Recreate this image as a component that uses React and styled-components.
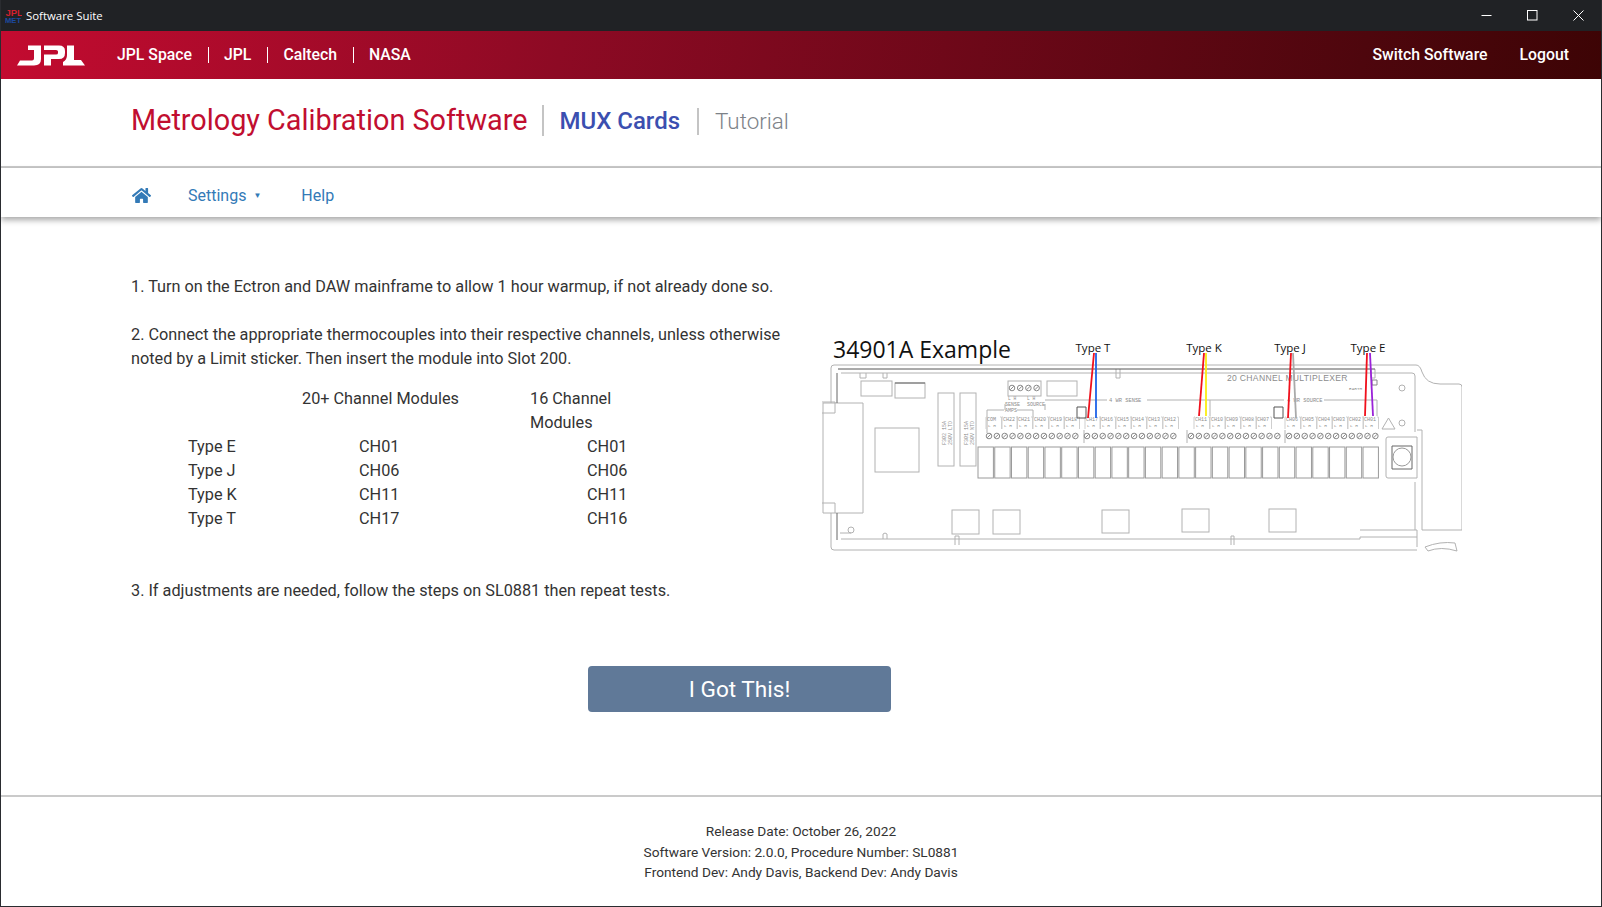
import React from "react";
import styled, { createGlobalStyle } from "styled-components";
import { FaHome } from "react-icons/fa";

const GlobalStyle = createGlobalStyle`
  html, body {
    margin: 0;
    padding: 0;
    background: #fff;
  }
  body {
    font-family: Roboto, "Liberation Sans", sans-serif;
  }
`;

const Page = styled.div`
  width: 1602px;
  height: 907px;
  box-sizing: border-box;
  display: flex;
  flex-direction: column;
  overflow: hidden;
  border-left: 1px solid #2a2c30;
  border-right: 1px solid #2a2c30;
  border-bottom: 1px solid #2a2c30;
`;

const TitleBar = styled.div`
  height: 31px;
  flex: none;
  background: #202225;
  display: flex;
  align-items: center;
  padding-left: 4px;
  color: #fff;
  font-family: "Open Sans", sans-serif;
  font-size: 11.4px;
`;

const TitleText = styled.span`
  margin-left: 4px;
`;

const WindowButtons = styled.div`
  margin-left: auto;
  display: flex;
  height: 100%;
`;

const WindowButton = styled.div`
  width: 46px;
  display: flex;
  align-items: center;
  justify-content: center;
`;

const RedBar = styled.div`
  height: 48px;
  flex: none;
  background: linear-gradient(100deg, #c30b30 0%, #8d0a24 35%, #4e060d 85%, #3d0405 100%);
  display: flex;
  align-items: center;
  padding: 0 32px 0 16px;
  color: #fff;
  font-size: 15.8px;
  font-weight: 500;
`;

const RedLinks = styled.div`
  display: flex;
  align-items: center;
  margin-left: 32px;
`;

const RedLink = styled.span`
  padding: 0 16px;
  line-height: 16px;
  border-left: ${(p) => (p.$first ? "none" : "1px solid #fff")};
  padding-left: ${(p) => (p.$first ? "0" : "15px")};
`;

const RedRight = styled.div`
  margin-left: auto;
  display: flex;
  gap: 32px;
  line-height: 16px;
`;

const Header = styled.header`
  height: 89px;
  flex: none;
  box-sizing: border-box;
  border-bottom: 2px solid #cacaca;
  padding: 26px 0 0 130px;
  display: flex;
  align-items: flex-start;
`;

const AppTitle = styled.span`
  font-size: 28.8px;
  line-height: 31px;
  color: #c10e30;
  padding-right: 15px;
  border-right: 2px solid #c4c4c4;
`;

const SubTitle = styled.span`
  line-height: 27px;
  margin-top: 3px;
  font-size: ${(p) => (p.$active ? "24px" : "22.4px")};
  font-weight: ${(p) => (p.$active ? 500 : 300)};
  color: ${(p) => (p.$active ? "#3b4fb0" : "#7d8288")};
  padding: 0 ${(p) => (p.$active ? "17px" : "0")} 0 ${(p) => (p.$active ? "15px" : "0")};
  ${(p) => p.$active && "border-right: 2px solid #c4c4c4;"}
  margin-left: ${(p) => (p.$active ? "0" : "16px")};
`;

const NavBar = styled.nav`
  height: 49px;
  flex: none;
  box-sizing: border-box;
  display: flex;
  align-items: center;
  padding: 5px 0 0 131px;
  color: #337ab7;
  font-size: 16px;
  box-shadow: 0 3px 6px rgba(0, 0, 0, 0.35);
  position: relative;
`;

const HomeLink = styled.span`
  display: flex;
  font-size: 19px;
  margin-right: 37px;
`;

const NavItem = styled.span`
  margin-right: 40px;
  display: flex;
  align-items: center;
`;

const Caret = styled.span`
  font-size: 8px;
  margin-left: 7px;
`;

const Main = styled.main`
  flex: 1;
  box-sizing: border-box;
  padding: 58px 0 0 130px;
  display: flex;
  flex-direction: column;
  font-size: 16.25px;
  line-height: 24px;
  color: #333;
`;

const Columns = styled.div`
  display: flex;
  align-items: flex-start;
`;

const LeftColumn = styled.div`
  width: 691px;
  flex: none;
`;

const RightColumn = styled.div`
  padding-top: 50px;
`;

const Step = styled.p`
  margin: 0 0 ${(p) => p.$gap ?? 24}px;
  width: 660px;
`;

const ChannelGrid = styled.div`
  display: grid;
  grid-template-columns: repeat(12, 57px);
  margin-bottom: 48px;
`;

const Cell = styled.div`
  grid-column: ${(p) => p.$col} / span ${(p) => p.$span};
`;

const ButtonRow = styled.div`
  display: flex;
  padding-left: 457px;
  margin-top: 63px;
`;

const GotItButton = styled.button`
  width: 303px;
  height: 46px;
  border: none;
  border-radius: 4px;
  background: #607998;
  color: #fff;
  font-family: inherit;
  font-size: 22.6px;
`;

const Footer = styled.footer`
  height: 111px;
  flex: none;
  box-sizing: border-box;
  border-top: 2px solid #cacaca;
  padding-top: 24px;
  text-align: center;
  font-size: 13.7px;
  line-height: 20.5px;
  color: #333;
`;

// stylised JPL wordmark, drawn from the crop
const JplLogo = () => (
  <svg width="68" height="21" viewBox="0 0 68 21">
    <path d="M0 20.5 L3 15.5 H15 Q17 15.5 17 13.5 V5 H11 V0.5 H24 V14 Q24 20.5 17 20.5 Z" fill="#fff" />
    <path d="M27 0.5 H42 Q48 0.5 48 6 V8 Q48 14 42 14 H34 V20.5 H27 V9.5 H39 Q41 9.5 41 8 V6.5 Q41 5 39 5 H27 Z" fill="#fff" />
    <path d="M46 17 Q50 15 50 10 V0.5 H57 V15 H64 L68 20.5 H46 Z" fill="#fff" />
  </svg>
);

const AppIcon = () => (
  <svg width="17" height="15" viewBox="0 0 17 15">
    <text x="0.5" y="7.5" fontFamily="Liberation Sans" fontSize="9.5" fontWeight="700" fill="#d3202e">JPL</text>
    <text x="0" y="14.5" fontFamily="Liberation Sans" fontSize="7.6" fontWeight="700" fill="#1c4aa0">MET</text>
  </svg>
);

const Minimize = () => (
  <svg width="11" height="11" viewBox="0 0 11 11"><path d="M0.5 5.5 H10.5" stroke="#fff" /></svg>
);
const Maximize = () => (
  <svg width="11" height="11" viewBox="0 0 11 11"><rect x="0.5" y="0.5" width="9.5" height="9.5" fill="none" stroke="#fff" /></svg>
);
const CloseIcon = () => (
  <svg width="11" height="11" viewBox="0 0 11 11"><path d="M0.5 0.5 L10.5 10.5 M10.5 0.5 L0.5 10.5" stroke="#fff" /></svg>
);

// diagram coordinates are screenshot pixels, the viewBox takes care of the origin
const OX = 822;
const OY = 325;
const relays = Array.from({ length: 24 }, (_, i) => 978 + i * 16.74);
const screwGroups = [989, 1087, 1191, 1289];
const channels = [
  ["COM", 987], ["CH22", 1003], ["CH21", 1018], ["CH20", 1034], ["CH19", 1050], ["CH18", 1065],
  ["CH17", 1086], ["CH16", 1101], ["CH15", 1117], ["CH14", 1132], ["CH13", 1148], ["CH12", 1164],
  ["CH11", 1195], ["CH10", 1211], ["CH09", 1226], ["CH08", 1242], ["CH07", 1257],
  ["CH06", 1286], ["CH05", 1302], ["CH04", 1318], ["CH03", 1333], ["CH02", 1349], ["CH01", 1364],
];
const grayRects = [
  [861, 381, 31, 15], [895, 383, 30, 15], [938, 393, 16, 73], [960, 393, 16, 73],
  [875, 428, 44, 44], [1008, 381, 33, 15], [1047, 381, 30, 15],
  [952, 510, 27, 24], [993, 510, 27, 24], [1102, 510, 27, 23], [1182, 509, 27, 23], [1269, 509, 27, 23],
];
const wires = [
  ["#f0101c", 1094, 353, 1088, 418], ["#1d62e8", 1096, 353, 1096, 418],
  ["#f0101c", 1204, 353, 1199, 416], ["#fbee12", 1206, 353, 1206, 416],
  ["#f0101c", 1291, 353, 1288, 418], ["#aaaaaa", 1293, 353, 1296, 418],
  ["#f0101c", 1367, 353, 1365, 416], ["#9a22d8", 1370, 353, 1373, 416],
];
const labels = [["Type T", 1093], ["Type K", 1204], ["Type J", 1290], ["Type E", 1368]];

const Screw = ({ x, y }) => (
  <g stroke="#8a8a8a">
    <circle cx={x} cy={y} r="2.8" />
    <path d={`M${x - 1.8} ${y + 1.8} L${x + 1.8} ${y - 1.8}`} />
  </g>
);

const Diagram = () => (
  <svg width="640" height="233" viewBox={`${OX} ${OY} 640 233`}>
    <g fill="none" stroke="#b2b2b2" strokeWidth="1">
      <path d="M834 365 H1416 Q1420 365 1422 372 Q1426 384 1440 384 H1459 Q1462 384 1462 387 V530 M1462 530 H1422 V430 H1417 M1417 550 H834 Q831 550 831 547 V513 M831 403 V368 Q831 365 834 365" />
      <path d="M841 373 H1412 Q1415 373 1415 376 V432 M841 539 H1360 M1415 482 V530 M1360 530 H1417 V537 H1360 V539 M1417 537 V547" />
      <path d="M823 403 H863 V513 H823 Z M822 402 H835 V413 M822 413 H835 M822 503 H835 V513 M851 533 H840" />
      <path d="M1388 437 H1417 V478 H1388 Q1386 478 1386 476 V439 Q1386 437 1388 437" />
      <path d="M1425 547 Q1440 541 1455 543 L1457 551 Q1441 546 1428 551 Z" />
      <path d="M1382 429 L1388.5 418 L1395 429 Z" />
      <circle cx="1402" cy="388" r="3" />
      <circle cx="1402" cy="423" r="3" />
      <circle cx="851" cy="530" r="3" />
      <path d="M860 373 V378 H866 V373 M883 373 V378 H887 V373 M1116 369 V378 H1120 V369 M1371 369 V378 H1375 V369" />
      <path d="M883 539 V534 Q885 532 887 534 V539 M955 545 V536 H959 V545 M1231 545 V536 H1234 V545" />
      <path d="M1045 400 H1107 M1147 400 H1284 M1324 400 H1377 V416 M1210 400 V416" />
      <path d="M987 433 V410 H1004 M1017 410 H1033 V417 M1005 404 V410 M1045 404 V410" />
      <path d="M1084 430 V443 M1187 430 V443 M1285 430 V443" />
      {grayRects.map(([x, y, w, h]) => (
        <rect key={`${x}-${y}`} x={x} y={y} width={w} height={h} />
      ))}
      {channels.map(([name, x]) => (
        <path key={name} d={`M${x - 1} 429 V417 H${x} M${x + 13} 417 H${x + 14.5} V429`} stroke="#cfcfcf" />
      ))}
      {screwGroups.map((start) =>
        Array.from({ length: 12 }, (_, i) => (
          <Screw key={`${start}-${i}`} x={start + i * 7.85} y={436} />
        ))
      )}
      {[0, 1, 2, 3].map((i) => (
        <Screw key={i} x={1012 + i * 8.2} y={388} />
      ))}
      {relays.map((x) => (
        <rect key={x} x={x} y="447" width="15.4" height="31" stroke="#9a9a9a" />
      ))}
    </g>
    <path d="M838 369 H1375" stroke="#555" fill="none" />
    <path d="M895 383 H925 M837 373 V403 M837 513 V540" stroke="#666" fill="none" />
    <path d="M1077 407 H1086 V418 H1077 Z M1274 407 H1283 V418 H1274 Z" stroke="#555" fill="none" />
    <path d="M1392 446 H1412 V469 H1392 Z" stroke="#666" fill="none" />
    <circle cx="1402" cy="457" r="9" stroke="#999" fill="none" />
    <path d="M1372 380 H1377 V385 H1372 Z" stroke="#888" fill="none" />
    <g fontFamily="Liberation Mono, monospace" fill="#8c8c8c">
      <text x="1227" y="381" fontSize="8.6" letterSpacing="0.3" fontFamily="Liberation Sans, sans-serif">20 CHANNEL MULTIPLEXER</text>
      <text x="1109" y="402" fontSize="5.4">4 WR SENSE</text>
      <text x="1287" y="402" fontSize="5.4">4 WR SOURCE</text>
      <text x="1349" y="390" fontSize="4.4">EARTH</text>
      <text x="1008" y="400" fontSize="4.6">L H</text>
      <text x="1027" y="400" fontSize="4.6">L H</text>
      <text x="1005" y="406" fontSize="5">SENSE</text>
      <text x="1027" y="406" fontSize="5">SOURCE</text>
      <text x="1005" y="412" fontSize="5">AMPS</text>
      <text transform="rotate(-90 946 445)" x="946" y="445" fontSize="5">F302 15A</text>
      <text transform="rotate(-90 952 445)" x="952" y="445" fontSize="5">250V LTD</text>
      <text transform="rotate(-90 968 445)" x="968" y="445" fontSize="5">F301 15A</text>
      <text transform="rotate(-90 974 445)" x="974" y="445" fontSize="5">250V NTD</text>
      {channels.map(([name, x]) => (
        <g key={name}>
          <text x={x} y="421" fontSize="5">{name}</text>
          <text x={x + 1} y="427" fontSize="4.4">L  H</text>
        </g>
      ))}
    </g>
    {wires.map(([color, x1, y1, x2, y2]) => (
      <line key={color + x1} x1={x1} y1={y1} x2={x2} y2={y2} stroke={color} strokeWidth="1.8" />
    ))}
    <g fontFamily="Open Sans, sans-serif" fill="#111">
      <text x="833" y="358" fontSize="23">34901A Example</text>
      {labels.map(([name, x]) => (
        <text key={name} x={x} y="352" fontSize="11.5" textAnchor="middle">{name}</text>
      ))}
    </g>
  </svg>
);

const rows = [
  ["Type E", "CH01", "CH01"],
  ["Type J", "CH06", "CH06"],
  ["Type K", "CH11", "CH11"],
  ["Type T", "CH17", "CH16"],
];

export default function App() {
  return (
    <Page>
      <GlobalStyle />
      <TitleBar>
        <AppIcon />
        <TitleText>Software Suite</TitleText>
        <WindowButtons>
          <WindowButton><Minimize /></WindowButton>
          <WindowButton><Maximize /></WindowButton>
          <WindowButton><CloseIcon /></WindowButton>
        </WindowButtons>
      </TitleBar>
      <RedBar>
        <JplLogo />
        <RedLinks>
          <RedLink $first>JPL Space</RedLink>
          <RedLink>JPL</RedLink>
          <RedLink>Caltech</RedLink>
          <RedLink>NASA</RedLink>
        </RedLinks>
        <RedRight>
          <span>Switch Software</span>
          <span>Logout</span>
        </RedRight>
      </RedBar>
      <Header>
        <AppTitle>Metrology Calibration Software</AppTitle>
        <SubTitle $active>MUX Cards</SubTitle>
        <SubTitle>Tutorial</SubTitle>
      </Header>
      <NavBar>
        <HomeLink><FaHome /></HomeLink>
        <NavItem>Settings<Caret>▼</Caret></NavItem>
        <NavItem>Help</NavItem>
      </NavBar>
      <Main>
        <Columns>
          <LeftColumn>
            <Step>1. Turn on the Ectron and DAW mainframe to allow 1 hour warmup, if not already done so.</Step>
            <Step $gap={16}>
              2. Connect the appropriate thermocouples into their respective channels, unless otherwise noted by a Limit sticker. Then insert the module into Slot 200.
            </Step>
            <ChannelGrid>
              <Cell $col={4} $span={4}>20+ Channel Modules</Cell>
              <Cell $col={8} $span={2}>16 Channel Modules</Cell>
              {rows.map(([type, big, small]) => (
                <React.Fragment key={type}>
                  <Cell $col={2} $span={3}>{type}</Cell>
                  <Cell $col={5} $span={4}>{big}</Cell>
                  <Cell $col={9} $span={3}>{small}</Cell>
                </React.Fragment>
              ))}
            </ChannelGrid>
            <Step $gap={0}>3. If adjustments are needed, follow the steps on SL0881 then repeat tests.</Step>
          </LeftColumn>
          <RightColumn>
            <Diagram />
          </RightColumn>
        </Columns>
        <ButtonRow>
          <GotItButton>I Got This!</GotItButton>
        </ButtonRow>
      </Main>
      <Footer>
        <div>Release Date: October 26, 2022</div>
        <div>Software Version: 2.0.0, Procedure Number: SL0881</div>
        <div>Frontend Dev: Andy Davis, Backend Dev: Andy Davis</div>
      </Footer>
    </Page>
  );
}
